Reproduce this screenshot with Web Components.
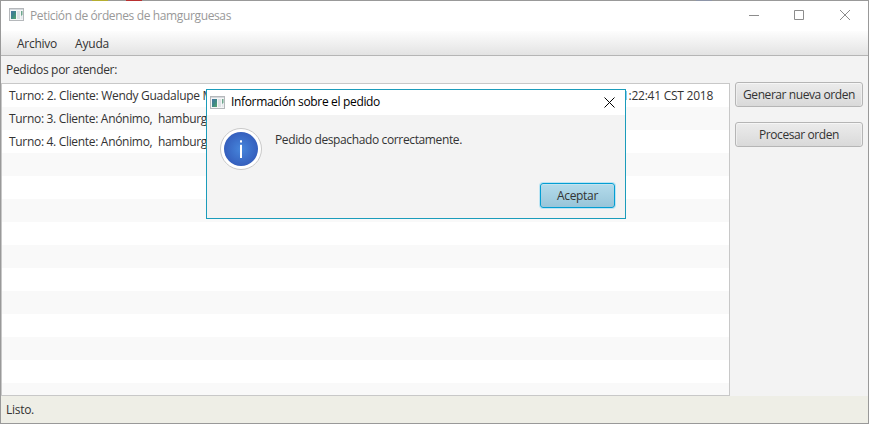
<!DOCTYPE html>
<html lang="es"><head><meta charset="utf-8"><title>Petición de órdenes</title>
<style>
html,body{margin:0;width:869px;height:424px;overflow:hidden;font:12px/16px "Open Sans","Noto Sans",sans-serif;color:#333}
</style></head><body>
<order-window></order-window>
<script>
const define=(name,html,after)=>customElements.define(name,class extends HTMLElement{
  connectedCallback(){
    if(this.shadowRoot)return;
    this.attachShadow({mode:'open'}).innerHTML=html;
    if(after)after(this);
  }
});

/* Text run whose letter spacing is adjusted to the advance width in "w". */
define('fit-text','<style>:host{display:inline-block;white-space:pre;flex:none}span{display:inline-block;white-space:pre}</style><span><slot></slot></span>',el=>{
  const span=el.shadowRoot.querySelector('span');
  const w=+el.getAttribute('w');
  span.style.letterSpacing=((w-span.getBoundingClientRect().width)/el.textContent.length)+'px';
  el.style.width=w+'px';
});

define('app-icon',`<style>:host{display:block;width:15px;height:13px;flex:none}svg{display:block}</style>
<svg width="15" height="13" viewBox="0 0 15 13"><defs><linearGradient id="g" x1="0" y1="0" x2="1" y2="1"><stop stop-color="#4773a3"/><stop offset=".5" stop-color="#3d8787"/><stop offset="1" stop-color="#58a66a"/></linearGradient></defs>
<rect x=".5" y=".5" width="14" height="12" fill="#f5f6f7" stroke="#b5b8bb"/><path d="M1 1.5h13" stroke="#d5d9dd"/><rect x="2" y="3" width="5" height="8" fill="url(#g)"/><rect x="8" y="3" width="3" height="8" fill="#dce2e5"/><path d="M12 3h1.500v4l-1.500 1z" fill="#6ea78d"/><path d="M12 8h1.500v3h-1.500z" fill="#e3e7eb"/></svg>`);

define('window-controls',`<style>:host{display:flex;margin-left:auto}svg{display:block}</style>
<svg width="115" height="28" viewBox="0 0 115 28" fill="none" stroke="#8c8c8c"><path d="M0 14.500h10M45.500 9.500h9v9h-9zM91 9l10 10M101 9L91 19"/></svg>`);

define('menu-bar',`<style>:host{display:flex;box-sizing:border-box;height:25px;padding:5px 16px 0;gap:17px;background:linear-gradient(#fdfdfd,#e3e3e3);border-bottom:1px solid #b5b5b5}</style><slot></slot>`);

define('push-button',`<style>:host{display:block;height:25px}
button{box-sizing:border-box;display:flex;align-items:center;justify-content:center;width:100%;height:100%;padding:0;margin:0;border:1px solid #b5b5b5;border-radius:3px;background:linear-gradient(#ececec,#d9d9d9);box-shadow:inset 0 1px #f6f6f6,inset 1px 0 #eee,inset -1px 0 #eee;font:inherit;color:#333}
:host([primary]) button{border-color:#039ed3;background:linear-gradient(#b4dbeb,#98c5d9);box-shadow:0 0 0 1px #bce4f3,inset 0 1px #c4e3ef}
</style><button><slot></slot></button>`);

define('order-row',`<style>:host{display:flex;box-sizing:border-box;height:23px;padding:4px 15px 0 7px;justify-content:space-between;background:#fff;flex:none}
:host(:nth-child(even)){background:#f9f9f9}</style><slot></slot>`);

define('order-list',`<style>:host{display:flex;flex-direction:column;box-sizing:border-box;width:729px;height:313px;border:1px solid #c8c8c8;overflow:hidden;background:#fff}</style><slot></slot>`);

define('info-badge',`<style>:host{display:block;width:42px;height:42px;flex:none}svg{display:block}</style>
<svg width="42" height="42" viewBox="0 0 42 42"><defs><radialGradient id="b"><stop stop-color="#4686dc"/><stop offset="1" stop-color="#355fbd"/></radialGradient></defs><circle cx="21" cy="21" r="20.500" fill="#fff" stroke="#c9c9c9"/><circle cx="21" cy="21" r="17" fill="url(#b)"/><rect x="20" y="12.300" width="2" height="2.200" fill="#fff"/><rect x="20" y="16.800" width="2" height="13.200" fill="#fff"/></svg>`);

define('message-dialog',`<style>:host{display:flex;flex-direction:column;box-sizing:border-box;width:420px;height:130px;border:1px solid #1b9cbb;background:#f3f3f3}
header{display:flex;height:25px;background:#fff;color:#000;padding:0 10px 0 3px;align-items:center}
header fit-text{margin-top:-1px}
app-icon{margin-right:6px}
header svg{margin-left:auto;display:block}
main{display:flex;gap:13px;padding:13px 13px 0}main fit-text{margin-top:4px}
footer{display:flex;justify-content:flex-end;margin-top:13px;padding-right:10px}push-button{width:75px}</style>
<header><app-icon></app-icon><fit-text w="149">Información sobre el pedido</fit-text><svg width="11" height="11" viewBox="0 0 11 11" stroke="#000"><path d="M.5.5l10 10M10.500.5l-10 10"/></svg></header>
<main><info-badge></info-badge><fit-text w="187">Pedido despachado correctamente.</fit-text></main>
<footer><push-button primary><fit-text w="41">Aceptar</fit-text></push-button></footer>`);

define('order-window',`<style>
:host{position:relative;display:flex;flex-direction:column;box-sizing:border-box;width:869px;height:424px;padding:1px;
background:linear-gradient(90deg,#999 92px,#b5ae2f 92px 108px,#999 108px 126px,#b83030 126px 142px,#999 142px 696px,#8d95a8 696px 712px,#999 712px) 0 0/100% 1px no-repeat,#999}
.title{display:flex;height:30px;background:#fff;padding:0 4px 0 8px;color:#999}
.title app-icon{margin:7px 6px 0 0}.title fit-text{margin-top:7px}
.label{height:21px;padding:6px 0 0 5px;background:#f3f3f3}
.body{display:flex;height:313px;background:#f3f3f3}
.actions{display:flex;flex-direction:column;gap:15px;width:128px;margin:-1px 0 0 5px}
.status{flex:1;background:#eeeee6;padding:6px 5px 0}
message-dialog{position:absolute;left:206px;top:89px}
</style>
<div class="title"><app-icon></app-icon><fit-text w="201">Petición de órdenes de hamgurguesas</fit-text><window-controls></window-controls></div>
<menu-bar><fit-text w="40">Archivo</fit-text><fit-text w="34" style="margin-left:1px">Ayuda</fit-text></menu-bar>
<div class="label"><fit-text w="111">Pedidos por atender:</fit-text></div>
<div class="body"><order-list>
<order-row><fit-text w="204">Turno: 2. Cliente: Wendy Guadalupe M</fit-text><fit-text w="91" style="margin-right:1px">1:22:41 CST 2018</fit-text></order-row>
<order-row><fit-text w="198">Turno: 3. Cliente: Anónimo,  hamburg</fit-text></order-row>
<order-row><fit-text w="198">Turno: 4. Cliente: Anónimo,  hamburg</fit-text></order-row>
${'<order-row></order-row>'.repeat(11)}
</order-list><div class="actions"><push-button><fit-text w="112">Generar nueva orden</fit-text></push-button><push-button><fit-text w="80">Procesar orden</fit-text></push-button></div></div>
<div class="status"><fit-text w="28">Listo.</fit-text></div>
<message-dialog></message-dialog>`);
</script>
</body></html>
